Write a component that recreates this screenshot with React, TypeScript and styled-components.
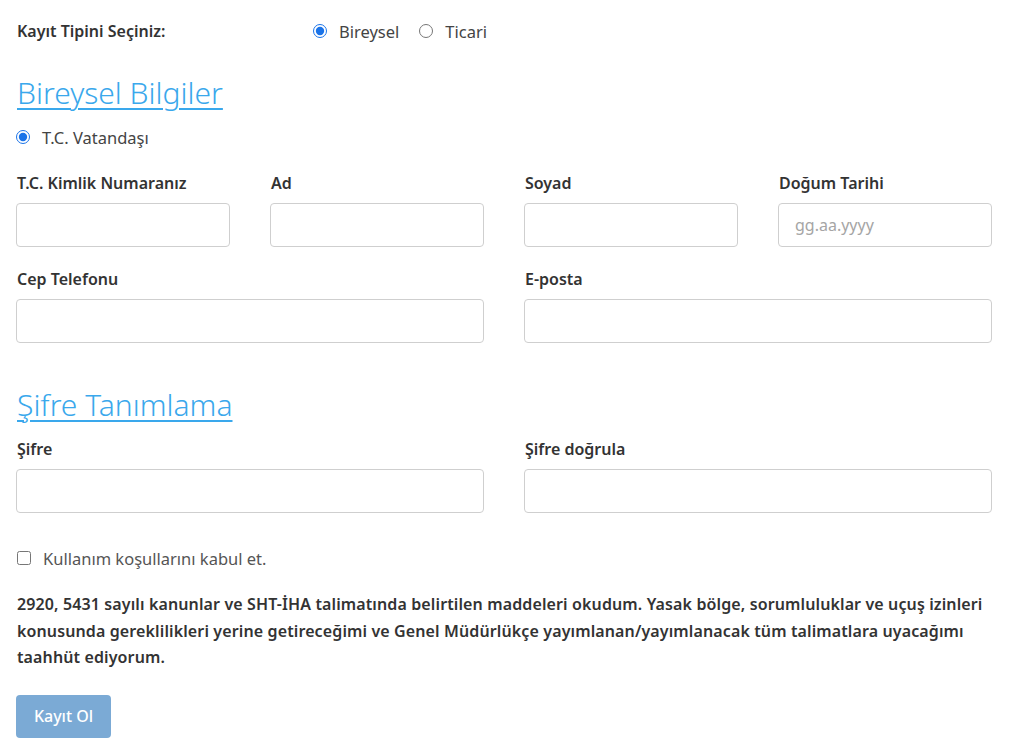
import React from "react";
import styled, { createGlobalStyle } from "styled-components";

const Global = createGlobalStyle`
  html, body { margin: 0; padding: 0; background: #fff; }
  body { font-family: "Noto Sans", "Open Sans", sans-serif; color: #3a3a3a; }
  * { box-sizing: border-box; }
`;

const Page = styled.div`
  width: 976px;
  margin-left: 16px;
  padding-top: 18px;
  display: flex;
  flex-direction: column;
`;

const TypeRow = styled.div`
  display: flex;
  align-items: center;
  height: 26px;
`;

const TypeLabel = styled.div`
  width: 297px;
  font-size: 16px;
  font-weight: 600;
  color: #333;
  padding-left: 1px;
`;

const RadioGroup = styled.div`
  display: flex;
  align-items: center;
  gap: 20px;
`;

const Option = styled.label`
  display: flex;
  align-items: center;
  gap: 12px;
  font-size: 16.5px;
  color: #444;
  input {
    margin: 0;
    width: 14px;
    height: 14px;
    accent-color: #1a73e8;
  }
`;

const SectionTitle = styled.h2<{ $top: number }>`
  margin: ${(p) => p.$top}px 0 0 1px;
  font-size: 30px;
  font-weight: 300;
  line-height: 38px;
  color: #3aa8ec;
  text-decoration: underline;
  text-decoration-thickness: 2px;
  text-underline-offset: 4px;
  width: fit-content;
`;

const CitizenRow = styled.div`
  margin-top: 14px;
  height: 22px;
  display: flex;
  align-items: center;
`;

const Grid = styled.div<{ $cols: number; $top: number }>`
  display: grid;
  grid-template-columns: repeat(${(p) => p.$cols}, 1fr);
  column-gap: 40px;
  margin-top: ${(p) => p.$top}px;
`;

const Field = styled.div`
  display: flex;
  flex-direction: column;
`;

const FieldLabel = styled.label`
  font-size: 16px;
  font-weight: 600;
  color: #333;
  line-height: 20px;
  height: 20px;
  padding-left: 1px;
  margin-bottom: 10px;
`;

const Input = styled.input`
  height: 44px;
  width: 100%;
  border: 1px solid #cfcfcf;
  border-radius: 4px;
  padding: 0 16px;
  font-family: inherit;
  font-size: 16px;
  color: #333;
  outline: none;
  &::placeholder { color: #a5a5a5; }
`;

const CheckRow = styled.label`
  margin-top: 34px;
  display: flex;
  align-items: center;
  gap: 12px;
  font-size: 16.5px;
  color: #555;
  height: 22px;
  padding-left: 1px;
  input {
    margin: 0;
    width: 14px;
    height: 14px;
  }
`;

const Declaration = styled.p`
  margin: 22px 0 0 1px;
  font-size: 16px;
  font-weight: 600;
  letter-spacing: 0.12px;
  line-height: 26.5px;
  color: #333;
`;

const Submit = styled.button`
  margin-top: 24px;
  width: 95px;
  height: 43px;
  border: none;
  border-radius: 4px;
  background: #7baad5;
  color: #fff;
  font-family: inherit;
  font-size: 16px;
  font-weight: 500;
  cursor: not-allowed;
`;

export default function App() {
  return (
    <>
      <Global />
      <Page>
        <TypeRow>
          <TypeLabel>Kayıt Tipini Seçiniz:</TypeLabel>
          <RadioGroup>
            <Option>
              <input type="radio" name="tip" defaultChecked /> Bireysel
            </Option>
            <Option>
              <input type="radio" name="tip" /> Ticari
            </Option>
          </RadioGroup>
        </TypeRow>

        <SectionTitle $top={30}>Bireysel Bilgiler</SectionTitle>
        <CitizenRow>
          <Option>
            <input type="radio" name="uyruk" defaultChecked /> T.C. Vatandaşı
          </Option>
        </CitizenRow>

        <Grid $cols={4} $top={25}>
          <Field>
            <FieldLabel>T.C. Kimlik Numaranız</FieldLabel>
            <Input />
          </Field>
          <Field>
            <FieldLabel>Ad</FieldLabel>
            <Input />
          </Field>
          <Field>
            <FieldLabel>Soyad</FieldLabel>
            <Input />
          </Field>
          <Field>
            <FieldLabel>Doğum Tarihi</FieldLabel>
            <Input placeholder="gg.aa.yyyy" />
          </Field>
        </Grid>
        <Grid $cols={2} $top={22}>
          <Field>
            <FieldLabel>Cep Telefonu</FieldLabel>
            <Input />
          </Field>
          <Field>
            <FieldLabel>E-posta</FieldLabel>
            <Input />
          </Field>
        </Grid>

        <SectionTitle $top={43}>Şifre Tanımlama</SectionTitle>
        <Grid $cols={2} $top={15}>
          <Field>
            <FieldLabel>Şifre</FieldLabel>
            <Input type="password" />
          </Field>
          <Field>
            <FieldLabel>Şifre doğrula</FieldLabel>
            <Input type="password" />
          </Field>
        </Grid>

        <CheckRow>
          <input type="checkbox" /> Kullanım koşullarını kabul et.
        </CheckRow>

        <Declaration>
          2920, 5431 sayılı kanunlar ve SHT-İHA talimatında belirtilen maddeleri okudum. Yasak
          bölge, sorumluluklar ve uçuş izinleri konusunda gereklilikleri yerine getireceğimi ve
          Genel Müdürlükçe yayımlanan/yayımlanacak tüm talimatlara uyacağımı taahhüt ediyorum.
        </Declaration>

        <div>
          <Submit disabled>Kayıt Ol</Submit>
        </div>
      </Page>
    </>
  );
}
